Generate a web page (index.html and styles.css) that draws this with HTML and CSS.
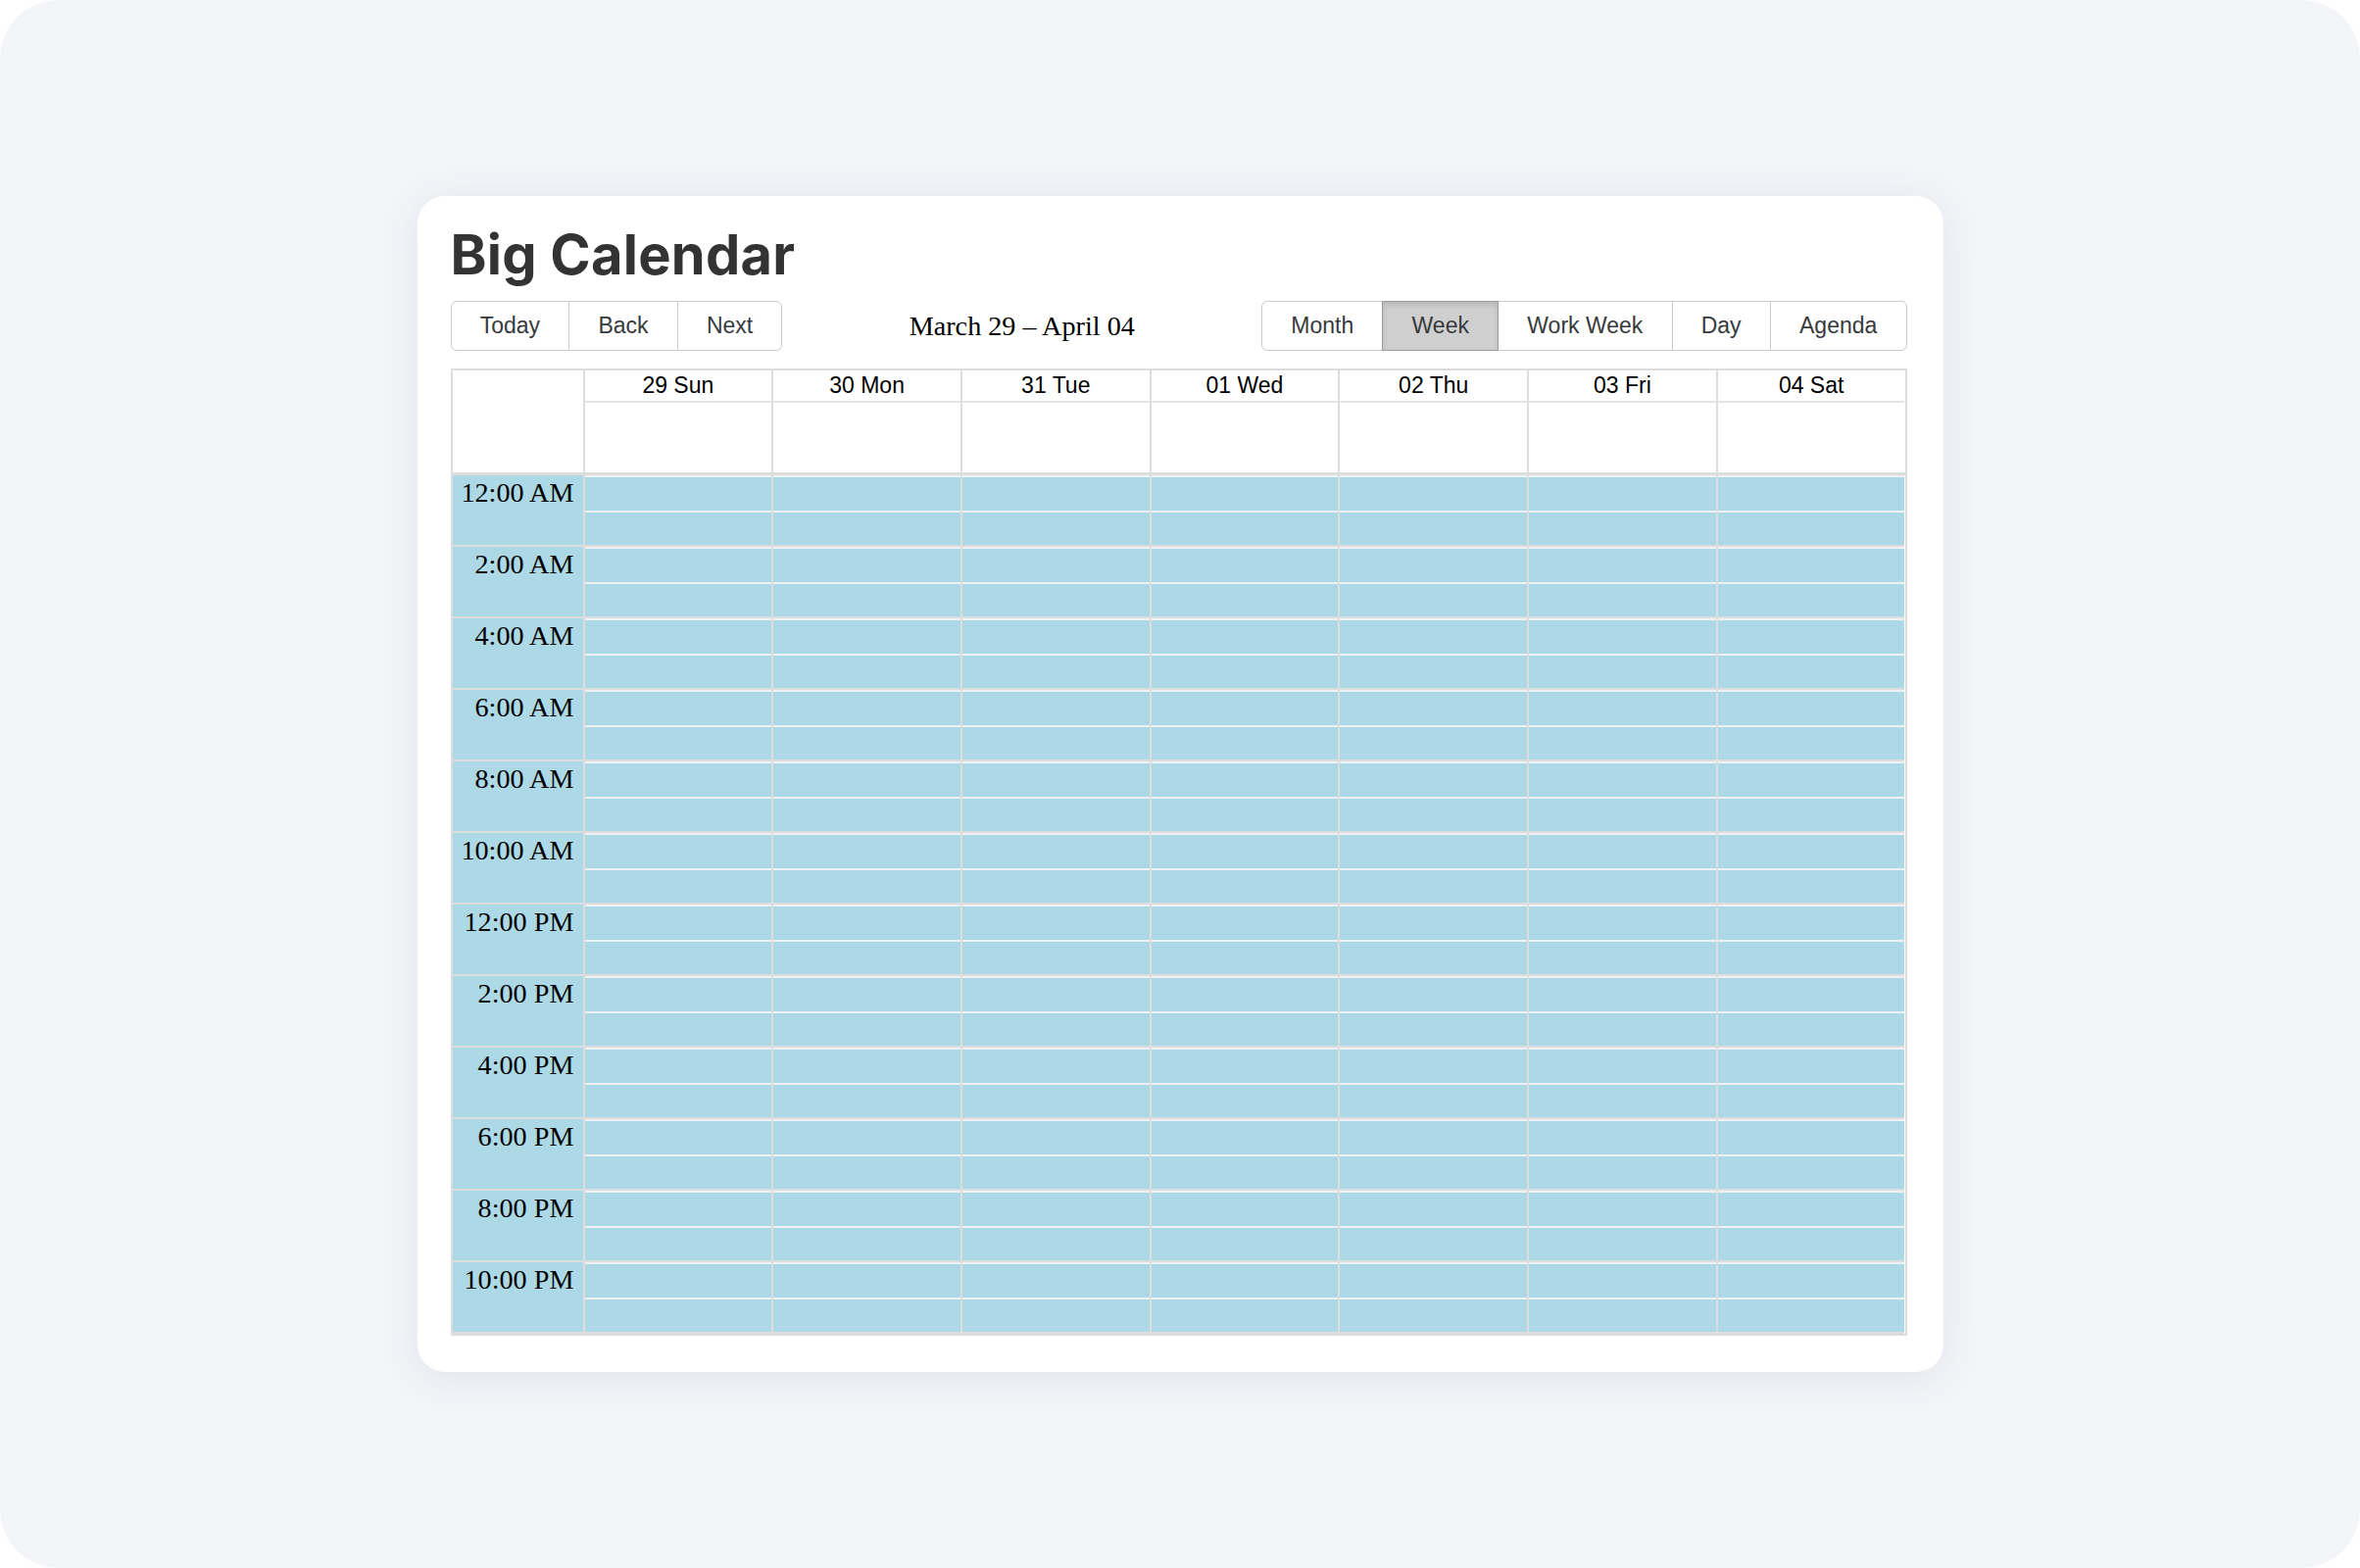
FILE: index.html
```html
<!DOCTYPE html>
<html lang="en">
<head>
<meta charset="utf-8">
<title>Big Calendar</title>
<link rel="stylesheet" href="styles.css">
</head>
<body>
<div class="frame">
  <div class="card">
    <h1 class="title">Big Calendar</h1>
    <div class="toolbar">
      <div class="btn-group">
        <button class="btn">Today</button><button class="btn">Back</button><button class="btn">Next</button>
      </div>
      <div class="toolbar-label">March 29 – April 04</div>
      <div class="btn-group">
        <button class="btn">Month</button><button class="btn active">Week</button><button class="btn">Work Week</button><button class="btn">Day</button><button class="btn">Agenda</button>
      </div>
    </div>
    <div class="cal">
      <div class="cal-head">
        <div class="corner"></div>
        <div class="hdr">29 Sun</div>
        <div class="hdr">30 Mon</div>
        <div class="hdr">31 Tue</div>
        <div class="hdr">01 Wed</div>
        <div class="hdr">02 Thu</div>
        <div class="hdr">03 Fri</div>
        <div class="hdr">04 Sat</div>
        <div class="allday"></div><div class="allday"></div><div class="allday"></div><div class="allday"></div><div class="allday"></div><div class="allday"></div><div class="allday"></div>
      </div>
      <div class="time-content">
        <div class="group"><div class="tlabel">12:00 AM</div><div class="slot"></div><div class="slot"></div><div class="slot"></div><div class="slot"></div><div class="slot"></div><div class="slot"></div><div class="slot"></div></div>
        <div class="group"><div class="tlabel">2:00 AM</div><div class="slot"></div><div class="slot"></div><div class="slot"></div><div class="slot"></div><div class="slot"></div><div class="slot"></div><div class="slot"></div></div>
        <div class="group"><div class="tlabel">4:00 AM</div><div class="slot"></div><div class="slot"></div><div class="slot"></div><div class="slot"></div><div class="slot"></div><div class="slot"></div><div class="slot"></div></div>
        <div class="group"><div class="tlabel">6:00 AM</div><div class="slot"></div><div class="slot"></div><div class="slot"></div><div class="slot"></div><div class="slot"></div><div class="slot"></div><div class="slot"></div></div>
        <div class="group"><div class="tlabel">8:00 AM</div><div class="slot"></div><div class="slot"></div><div class="slot"></div><div class="slot"></div><div class="slot"></div><div class="slot"></div><div class="slot"></div></div>
        <div class="group"><div class="tlabel">10:00 AM</div><div class="slot"></div><div class="slot"></div><div class="slot"></div><div class="slot"></div><div class="slot"></div><div class="slot"></div><div class="slot"></div></div>
        <div class="group"><div class="tlabel">12:00 PM</div><div class="slot"></div><div class="slot"></div><div class="slot"></div><div class="slot"></div><div class="slot"></div><div class="slot"></div><div class="slot"></div></div>
        <div class="group"><div class="tlabel">2:00 PM</div><div class="slot"></div><div class="slot"></div><div class="slot"></div><div class="slot"></div><div class="slot"></div><div class="slot"></div><div class="slot"></div></div>
        <div class="group"><div class="tlabel">4:00 PM</div><div class="slot"></div><div class="slot"></div><div class="slot"></div><div class="slot"></div><div class="slot"></div><div class="slot"></div><div class="slot"></div></div>
        <div class="group"><div class="tlabel">6:00 PM</div><div class="slot"></div><div class="slot"></div><div class="slot"></div><div class="slot"></div><div class="slot"></div><div class="slot"></div><div class="slot"></div></div>
        <div class="group"><div class="tlabel">8:00 PM</div><div class="slot"></div><div class="slot"></div><div class="slot"></div><div class="slot"></div><div class="slot"></div><div class="slot"></div><div class="slot"></div></div>
        <div class="group"><div class="tlabel">10:00 PM</div><div class="slot"></div><div class="slot"></div><div class="slot"></div><div class="slot"></div><div class="slot"></div><div class="slot"></div><div class="slot"></div></div>
      </div>
    </div>
  </div>
</div>
</body>
</html>
```

FILE: styles.css
```css
html, body {
  margin: 0;
  padding: 0;
  background: #ffffff;
}

.frame {
  width: 2408px;
  height: 1600px;
  background: #f4f5f9;
  border-radius: 60px;
  display: flex;
  align-items: center;
  justify-content: center;
}

.card {
  width: 1557px;
  box-sizing: border-box;
  padding: 32px 37px 37px 34px;
  background: #ffffff;
  border-radius: 28px;
  box-shadow: 0 6px 44px rgba(60, 72, 96, 0.10);
}

.title {
  margin: 0 0 19px;
  font-family: Inter, "Noto Sans", sans-serif;
  font-weight: 700;
  font-size: 56px;
  line-height: 56px;
  letter-spacing: 0.25px;
  color: #333333;
}

.toolbar {
  display: flex;
  align-items: center;
  height: 51px;
  margin-bottom: 18px;
}

.btn-group {
  display: flex;
}

.btn {
  box-sizing: border-box;
  height: 51px;
  margin: 0;
  padding: 0 29.2px;
  border: 1px solid #cccccc;
  background: #ffffff;
  color: #373a3c;
  font-family: "Liberation Sans", Arial, sans-serif;
  font-size: 23px;
  line-height: 49px;
  border-radius: 0;
}

.btn + .btn {
  margin-left: -1px;
}

.btn:first-child {
  border-radius: 6px 0 0 6px;
}

.btn:last-child {
  border-radius: 0 6px 6px 0;
}

.btn.active {
  position: relative;
  background: #cfcfcf;
  border-color: #9a9c9e;
  box-shadow: inset 0 3px 5px rgba(0, 0, 0, 0.12);
}

.toolbar-label {
  flex: 1;
  padding: 0 10px;
  text-align: center;
  font-family: "Liberation Serif", "Times New Roman", serif;
  font-size: 28.2px;
  color: #000000;
}

.cal {
  border: 2px solid #dddddd;
}

.cal-head {
  display: grid;
  grid-template-columns: 133px repeat(7, 1fr);
  grid-template-rows: 33px 71px;
  background: #ffffff;
}

.corner {
  grid-row: 1 / span 2;
}

.hdr {
  box-sizing: border-box;
  border-left: 2px solid #dddddd;
  border-bottom: 2px solid #e3e3e3;
  padding-top: 2px;
  text-align: center;
  font-family: "Liberation Sans", Arial, sans-serif;
  font-size: 23px;
  line-height: 26px;
  color: #000000;
}

.allday {
  border-left: 2px solid #dddddd;
}

.time-content {
  border-top: 3px solid #dddddd;
}

.group {
  display: grid;
  grid-template-columns: 133px repeat(7, 1fr);
  height: 73px;
}

.tlabel {
  box-sizing: border-box;
  background: #add8e6;
  border-bottom: 2px solid #dddddd;
  padding: 2px 9px 0 0;
  text-align: right;
  font-family: "Liberation Serif", "Times New Roman", serif;
  font-size: 28.2px;
  line-height: 31px;
  color: #000000;
}

.slot {
  box-sizing: border-box;
  border-left: 2px solid #dddddd;
  border-bottom: 2px solid #dddddd;
  background:
    linear-gradient(#eef2f4, #eef2f4) 0 0 / 100% 2px no-repeat,
    linear-gradient(#eef2f4, #eef2f4) 0 35.5px / 100% 2px no-repeat,
    #add8e6;
}
```
